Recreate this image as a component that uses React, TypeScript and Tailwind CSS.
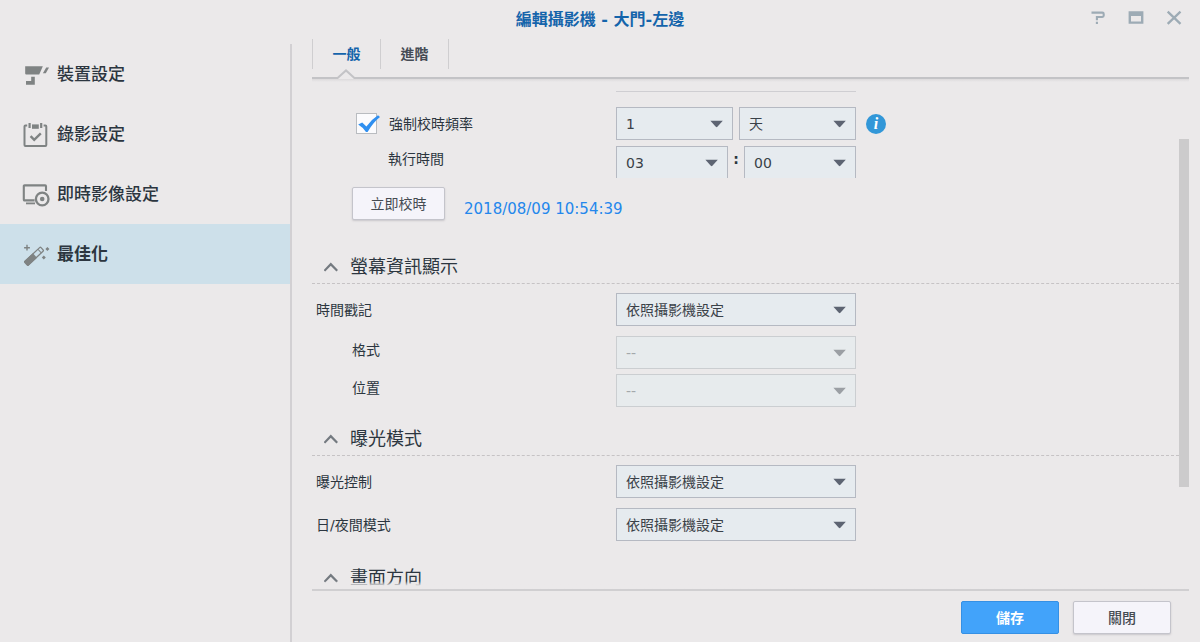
import React, { useState } from "react";

interface SelectProps {
    id: string;
    options: string[];
    className?: string;
    disabled?: boolean;
    label?: string;
}

const Select = ({ id, options, className = "w-60", disabled = false, label }: SelectProps) => {
    return (
        <div className={`relative shrink-0 ${className}`}>
            <select
                id={id}
                aria-label={label}
                disabled={disabled}
                className="block h-[33px] w-full appearance-none border border-[#b5b9c2] bg-[#e6ebef] pr-8 pl-[9px] text-sm text-[#3a4148] disabled:border-[#cbced1] disabled:bg-[#e7ebed] disabled:text-[#a3a8ab] disabled:opacity-100"
            >
                {options.map((option) => (
                    <option key={option}>{option}</option>
                ))}
            </select>
            <svg
                className={`pointer-events-none absolute top-[13px] right-[9px] ${disabled ? "text-[#9b9fa4]" : "text-[#5d6472]"}`}
                width="14"
                height="8"
                viewBox="0 0 14 8"
                fill="currentColor"
            >
                <path d="M0.4 0.8h12.4L7.4 6.8Q6.6 7.5 5.8 6.8z" />
            </svg>
        </div>
    );
};

interface SectionProps {
    title: string;
    className: string;
    children?: React.ReactNode;
}

const Section = ({ title, className, children }: SectionProps) => {
    const [open, setOpen] = useState(true);

    return (
        <section className={className}>
            <h2 className="border-b border-dashed border-[#c6c3c5]">
                <button
                    type="button"
                    className="flex h-[33px] w-full items-center pl-3 text-lg text-[#2c3640]"
                    onClick={() => setOpen(!open)}
                >
                    <svg className="mr-3 shrink-0" width="14" height="10" viewBox="0 0 14 10" fill="none" stroke="#747a80" strokeWidth="2.2">
                        <path d="M0.4 8.8 6.8 2.2l6.4 6.6" />
                    </svg>
                    {title}
                </button>
            </h2>
            {open && children}
        </section>
    );
};

const CameraIcon = () => (
    <svg width="28" height="28" viewBox="0 0 28 28" fill="#7f8383">
        <path d="M3.2 5.2h17.6l-3.6 8.2H4.2q-1 0-1-1z" />
        <path d="M24.2 6.4h2.8l-3.2 5.8h-2.9z" />
        <path d="M9.2 15.8h3.6v8H4v-3.7h5.2z" />
    </svg>
);

const CalendarIcon = () => (
    <svg width="28" height="28" viewBox="0 0 28 28" fill="none" stroke="#7f8383">
        <path d="M5.2 4.6H3.4q-.9 0-.9.9v18.6q0 .9.9.9h20q.9 0 .9-.9V5.5q0-.9-.9-.9h-1.8" strokeWidth="2" />
        <path d="M7.6 2v5M19.2 2v5" strokeWidth="2.2" />
        <path d="M10 5.6h6.8" strokeWidth="4.4" />
        <path d="m8.6 15.2 3.6 3.6 6.6-6.4" strokeWidth="2.4" />
    </svg>
);

const LiveViewIcon = () => (
    <svg width="28" height="28" viewBox="0 0 28 28" fill="none" stroke="#7f8383">
        <path d="M12.6 19.4H2.6q-.8 0-.8-.8V5.2q0-.8.8-.8h20.6q.8 0 .8.8V10" strokeWidth="2.1" />
        <path d="M4 22.4h9" strokeWidth="1.8" />
        <circle cx="20.2" cy="18" r="6.3" strokeWidth="2.3" />
        <circle cx="20.2" cy="18" r="2.3" fill="#7f8383" stroke="none" />
    </svg>
);

const WandIcon = () => (
    <svg width="28" height="28" viewBox="0 0 28 28" fill="none" stroke="#7f8383">
        <g transform="translate(3.4 23.3) rotate(-43)">
            <rect x="0.8" y="-2.5" width="22" height="5" rx="1" strokeWidth="1.3" />
            <path d="M0.8 -3h12.2v6H0.8z" fill="#7f8383" stroke="none" />
            <path d="M19.4 -2.5v5" strokeWidth="1" />
        </g>
        <path d="M5 3.8v5.8M2.1 6.7h5.8" strokeWidth="1.4" />
        <path d="m25.4 6 2 2-2 2-2-2zM21.8 14.4l2 2-2 2-2-2z" fill="#7f8383" stroke="none" />
    </svg>
);

const menu = [
    { name: "裝置設定", icon: <CameraIcon /> },
    { name: "錄影設定", icon: <CalendarIcon /> },
    { name: "即時影像設定", icon: <LiveViewIcon /> },
    { name: "最佳化", icon: <WandIcon /> },
];

const tabs = ["一般", "進階"];

const App = () => {
    const [page, setPage] = useState("最佳化");
    const [tab, setTab] = useState("一般");
    const [forceSync, setForceSync] = useState(true);

    return (
        <div className="flex h-screen flex-col overflow-hidden bg-[#ebe9ea] font-['DejaVu_Sans','Noto_Sans_CJK_TC',sans-serif] text-sm text-[#2c3640]">
            <header className="relative flex h-[39px] shrink-0 items-center justify-center">
                <h1 className="text-base font-bold text-[#1464ab]">編輯攝影機 - 大門-左邊</h1>
                <div className="absolute top-[9px] right-[17px] flex gap-5 text-[#9dabb5]">
                    <button type="button" aria-label="說明">
                        <svg width="18" height="18" viewBox="0 0 18 18" fill="none" stroke="currentColor" strokeWidth="2.1">
                            <path d="M2.5 3.6h10.8q1.4 0 1.4 1.4v1.6q0 1.4-1.4 1.4H7.9v3.2M7.9 12.8v2.1" />
                        </svg>
                    </button>
                    <button type="button" aria-label="最大化">
                        <svg width="18" height="18" viewBox="0 0 18 18" fill="currentColor" fillRule="evenodd">
                            <path d="M1.6 2.2h14.8v12.6H1.6zM4 7v5.6h10V7z" />
                        </svg>
                    </button>
                    <button type="button" aria-label="關閉視窗">
                        <svg width="18" height="18" viewBox="0 0 18 18" fill="none" stroke="currentColor" strokeWidth="2.3">
                            <path d="m2.7 2.6 12.8 12.2M15.5 2.6 2.7 14.8" />
                        </svg>
                    </button>
                </div>
            </header>

            <div className="flex min-h-0 flex-1">
                <nav className="mt-[5px] w-[292px] shrink-0 border-r-2 border-[#d2d0d3]">
                    {menu.map((item) => (
                        <button
                            key={item.name}
                            type="button"
                            className={`flex h-15 w-full items-center gap-[7px] pt-px pl-[22px] text-[17px] ${page === item.name ? "bg-[#cde0ea] font-bold" : "font-medium"}`}
                            onClick={() => setPage(item.name)}
                        >
                            {item.icon}
                            {item.name}
                        </button>
                    ))}
                </nav>

                <main className="mr-[11px] ml-5 flex min-w-0 flex-1 flex-col">
                    <div className="flex h-10 shrink-0 items-start border-b-2 border-[#c3c3c6]">
                        {tabs.map((name) => (
                            <div key={name} className="relative h-10">
                                <button
                                    type="button"
                                    className={`h-[30px] w-[68px] border-l border-[#cfced0] font-bold ${tab === name ? "text-[#1464ab]" : "text-[#454c55]"}`}
                                    onClick={() => setTab(name)}
                                >
                                    {name}
                                </button>
                                {tab === name && (
                                    <svg className="absolute bottom-0 left-6" width="20" height="10" viewBox="0 0 20 10">
                                        <path d="M1 9 10 1l9 8v1H1z" fill="#ebe9ea" />
                                        <path d="M0 9h1.6L10 1.4 18.4 9H20" fill="none" stroke="#c3c3c6" strokeWidth="2" />
                                    </svg>
                                )}
                            </div>
                        ))}
                        <div className="h-[30px] border-l border-[#cfced0]" />
                    </div>

                    <div className="relative min-h-0 flex-1 overflow-hidden">
                        <div className="absolute inset-x-0 top-0 h-[3px] bg-linear-to-b from-[#dcdadc] to-[#ebe9ea]" />
                        <div className="mt-3 ml-[304px] w-60 border-b border-[#cfced2]" />

                        <div className="mt-[15px] flex items-center">
                            <div className="flex w-[304px] shrink-0 items-center pl-11">
                                <span className="relative mr-3 h-[21px] w-[21px]">
                                    <input
                                        id="forceSync"
                                        type="checkbox"
                                        checked={forceSync}
                                        onChange={(e) => setForceSync(e.target.checked)}
                                        className="block h-[21px] w-[21px] appearance-none border border-[#b9bcc0] bg-[#fbfbfd]"
                                    />
                                    {forceSync && (
                                        <svg className="pointer-events-none absolute top-0 left-0" width="25" height="21" viewBox="0 0 25 21">
                                            <path d="M2.2 11.6 6.2 9.4l4.2 4Q15.4 6.4 22 2.2L24 4Q17 9.4 11.6 19H10Q6.6 14.2 2.2 11.6z" fill="#2f8ff0" />
                                        </svg>
                                    )}
                                </span>
                                <label htmlFor="forceSync">強制校時頻率</label>
                            </div>
                            <div className="flex items-center gap-[6px]">
                                <Select id="interval" label="校時頻率" options={["1", "2", "3"]} className="w-[117px]" />
                                <Select id="unit" label="單位" options={["天", "小時"]} className="w-[117px]" />
                                <button
                                    type="button"
                                    aria-label="資訊"
                                    className="ml-1 h-5 w-5 rounded-full bg-[#3297d8] font-['Liberation_Serif',serif] text-base leading-5 font-bold text-white italic"
                                >
                                    i
                                </button>
                            </div>
                        </div>

                        <div className="mt-[6px] flex h-8 items-start overflow-hidden">
                            <label htmlFor="hour" className="w-[304px] shrink-0 pl-19 leading-[26px]">
                                執行時間
                            </label>
                            <Select id="hour" options={["03", "04", "05"]} className="w-28" />
                            <span className="w-4 text-center leading-[26px] font-bold">:</span>
                            <Select id="minute" label="分鐘" options={["00", "15", "30", "45"]} className="w-28" />
                        </div>

                        <div className="mt-[9px] flex h-[33px] items-center pl-10">
                            <button
                                type="button"
                                className="h-[33px] w-[93px] rounded-xs border border-[#c4c4cb] bg-[#f5f4fa] text-[#454b52] shadow-[0_1px_2px_#c8c6ca]"
                            >
                                立即校時
                            </button>
                            <span className="ml-[19px] pt-3 text-[15px] text-[#2487ec]">2018/08/09 10:54:39</span>
                        </div>

                        <Section title="螢幕資訊顯示" className="mt-[30px]">
                            <div className="mt-[9px] flex items-center">
                                <label htmlFor="timestamp" className="w-[304px] shrink-0 pl-1">時間戳記</label>
                                <Select id="timestamp" options={["依照攝影機設定"]} />
                            </div>
                            <div className="mt-[10px] flex items-start">
                                <label htmlFor="format" className="w-[304px] shrink-0 pl-10 leading-7">格式</label>
                                <Select id="format" options={["--"]} disabled />
                            </div>
                            <div className="mt-[5px] flex items-start">
                                <label htmlFor="position" className="w-[304px] shrink-0 pl-10 leading-7">位置</label>
                                <Select id="position" options={["--"]} disabled />
                            </div>
                        </Section>

                        <Section title="曝光模式" className="mt-[15px]">
                            <div className="mt-[9px] flex items-center">
                                <label htmlFor="exposure" className="w-[304px] shrink-0 pl-1">曝光控制</label>
                                <Select id="exposure" options={["依照攝影機設定"]} />
                            </div>
                            <div className="mt-[10px] flex items-center">
                                <label htmlFor="dayNight" className="w-[304px] shrink-0 pl-1">日/夜間模式</label>
                                <Select id="dayNight" options={["依照攝影機設定"]} />
                            </div>
                        </Section>

                        <Section title="畫面方向" className="mt-5" />

                        {/* fade at the bottom of the scroll area */}
                        <div className="pointer-events-none absolute inset-x-0 bottom-0 h-2 bg-linear-to-b from-transparent to-[#ebe9ea] to-60%" />
                        {/* scrollbar */}
                        <div className="absolute top-[60px] right-0 bottom-[102px] w-[10px] bg-[#cccbcc]" />
                    </div>

                    <footer className="flex h-[53px] shrink-0 items-start justify-end gap-[14px] border-t-2 border-[#d0cfd1] pt-[10px] pr-[18px]">
                        <button
                            type="button"
                            className="h-[33px] w-[98px] rounded-xs border border-[#3590e4] bg-[#42a3fa] font-bold text-white"
                        >
                            儲存
                        </button>
                        <button
                            type="button"
                            className="h-[33px] w-[98px] rounded-xs border border-[#c4c4cb] bg-[#f5f4fa] font-medium text-[#454b52] shadow-[0_1px_2px_#c8c6ca]"
                        >
                            關閉
                        </button>
                    </footer>
                </main>
            </div>
        </div>
    );
};

export default App;
